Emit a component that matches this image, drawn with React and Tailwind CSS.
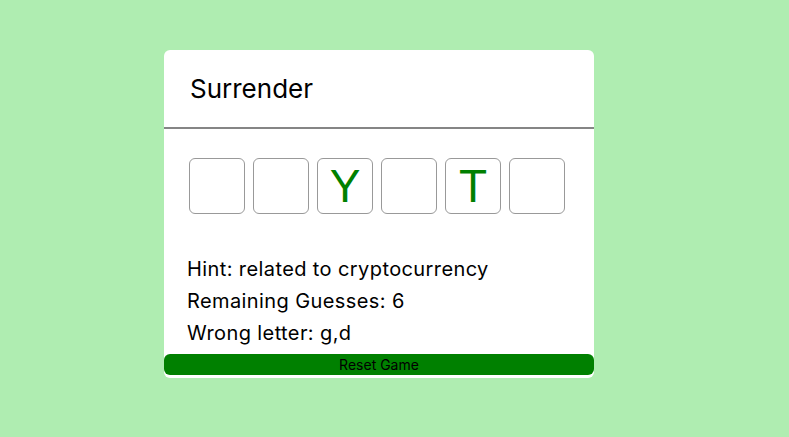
import React from 'react';

const letters = ['', '', 'Y', '', 'T', ''];

export default function App() {
  return (
    <div className="min-h-screen bg-[#afedb1] pt-[50px] pl-[164px]" style={{ fontFamily: 'Inter, sans-serif' }}>
      <div className="w-[430px] bg-white rounded-[6px] overflow-hidden pb-[3px]">
        <div className="h-[77px] flex items-center pl-[26px] text-[26px] text-black">Surrender</div>
        <div className="h-[2px] bg-[#858585]" />
        <div className="pt-[29px] pl-[25px] flex gap-2">
          {letters.map((l, i) => (
            <div
              key={i}
              className="w-[56px] h-[56px] border border-[#999] rounded-[6px] flex items-center justify-center text-[46px] text-[#008000] leading-none"
              style={{ fontFamily: '"Liberation Sans Narrow", "Liberation Sans", sans-serif' }}
            >
              {l}
            </div>
          ))}
        </div>
        <div className="mt-[39px] pl-[23px] text-[20px] leading-[32px] tracking-[0.4px] text-black">
          <div>Hint: related to cryptocurrency</div>
          <div>Remaining Guesses: 6</div>
          <div>Wrong letter: g,d</div>
        </div>
        <button className="mt-[5px] w-full h-[21px] bg-[#008000] rounded-[6px] text-[14px] text-black flex items-center justify-center">
          Reset Game
        </button>
      </div>
    </div>
  );
}
